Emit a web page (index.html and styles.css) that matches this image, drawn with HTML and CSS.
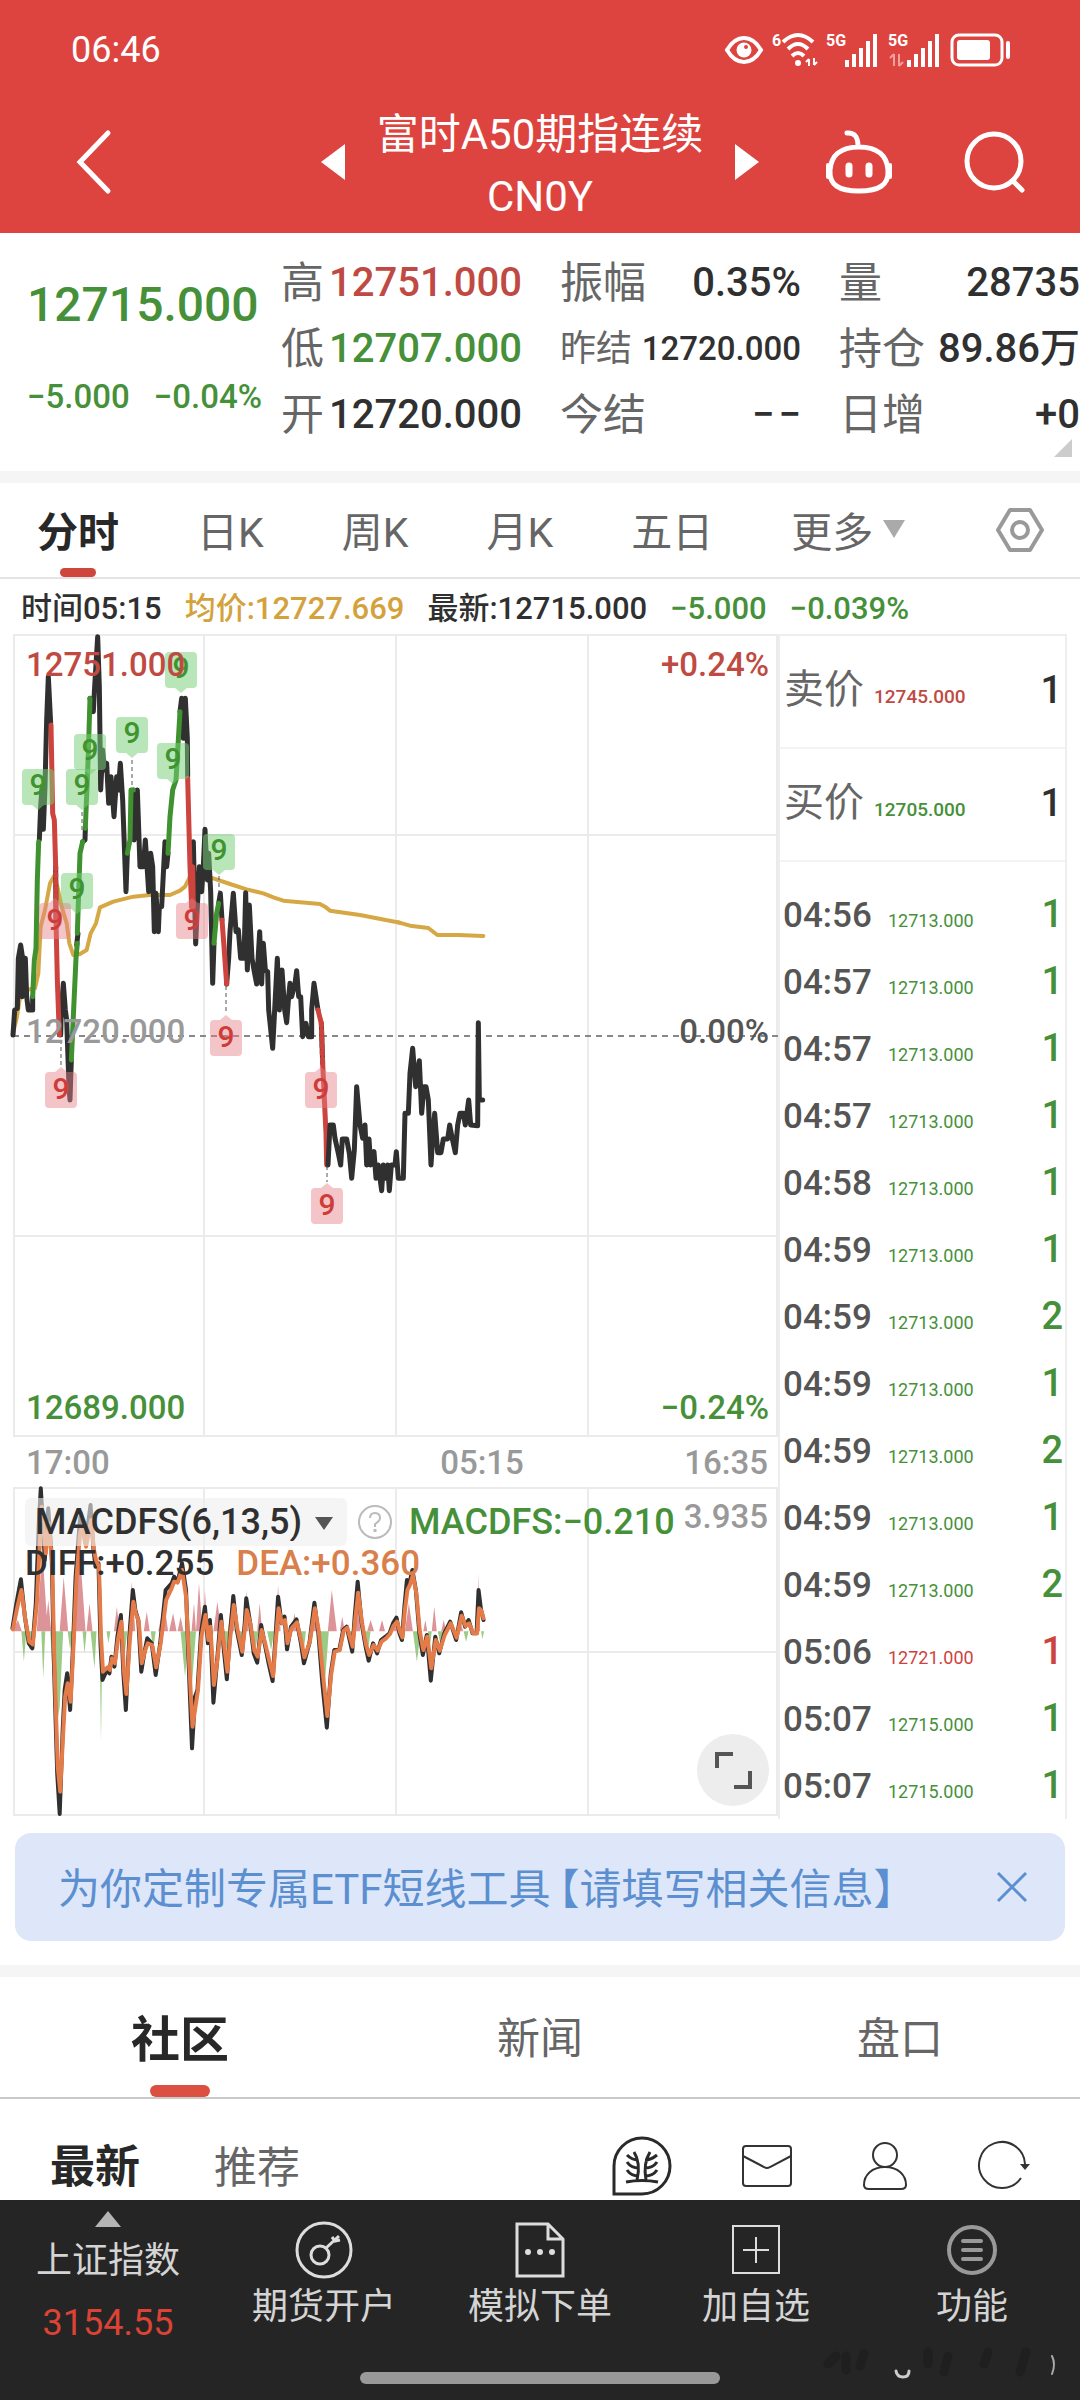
FILE: index.html
```html
<!DOCTYPE html>
<html lang="zh-CN">
<head>
<meta charset="utf-8">
<meta name="viewport" content="width=device-width, initial-scale=1">
<title>富时A50期指连续 CN0Y</title>
<link rel="stylesheet" href="styles.css">
</head>
<body>
<header class="top">
  <div class="status">
    <span>06:46</span>
    <div class="status-icons">
      <svg width="40" height="36" viewBox="0 0 40 36" fill="none" stroke="#fff" stroke-width="4"><path d="M3 18Q10 6 20 6T37 18Q30 30 20 30T3 18Z"/><circle cx="20" cy="18" r="7.500" fill="#fff" stroke="none"/><circle cx="22" cy="15" r="2" fill="#dd4440" stroke="none"/></svg>
      <svg width="46" height="36" viewBox="0 0 46 36" fill="none" stroke="#fff" stroke-width="4"><text x="0" y="14" class="tiny">6</text><path d="M11 10Q26-4 41 10M16 17Q26 7 36 17M20 24Q26 18 32 24"/><circle cx="26" cy="31" r="3" fill="#fff" stroke="none"/><path d="M37 27v7M42 26v7M34 30l3-3M45 30l-3 3" stroke-width="2"/></svg>
      <svg width="54" height="36" viewBox="0 0 54 36" fill="none" stroke="#fff" stroke-width="4"><text x="0" y="14" class="tiny">5G</text><path d="M21 28v7M28 22v13M35 16v19M42 9v26M49 2v33"/></svg>
      <svg width="54" height="36" viewBox="0 0 54 36" fill="none" stroke="#fff" stroke-width="4"><text x="0" y="14" class="tiny">5G</text><path d="M21 28v7M28 22v13M35 16v19M42 9v26M49 2v33"/><path d="M6 22v12M11 22v12M2 26l4-4M15 30l-4 4" stroke-width="2" opacity=".5"/></svg>
      <svg width="62" height="36" viewBox="0 0 62 36" fill="none" stroke="#fff"><rect x="2" y="3" width="50" height="30" rx="7" stroke-width="3"/><rect x="7" y="8" width="33" height="20" rx="3" fill="#fff" stroke="none"/><path d="M58 11v14" stroke-width="4" stroke-linecap="round"/></svg>
    </div>
  </div>
  <nav class="titlebar">
    <button class="ib back" aria-label="返回"><svg width="40" height="68" viewBox="0 0 40 68" fill="none" stroke="#fff" stroke-width="5" stroke-linecap="round"><path d="M34 5L6 34l28 29"/></svg></button>
    <div class="title">
      <button class="ib" aria-label="上一个"><svg width="24" height="36" viewBox="0 0 24 36"><path d="M24 0v36L0 18z" fill="#fff"/></svg></button>
      <h1>富时A50期指连续<br>CN0Y</h1>
      <button class="ib" aria-label="下一个"><svg width="24" height="36" viewBox="0 0 24 36"><path d="M0 0v36l24-18z" fill="#fff"/></svg></button>
    </div>
    <div class="actions">
      <button class="ib" aria-label="助手"><svg width="72" height="68" viewBox="0 0 72 68" fill="none" stroke="#fff" stroke-width="5" stroke-linecap="round"><path d="M24 5Q35 4 35 18M36 19C55 19 64 28 65 42C66 57 56 63 36 63S6 57 7 42C8 28 17 19 36 19Z"/><path d="M5 37v12M67 37v12" stroke-width="4"/><path d="M26 38v8M46 38v8" stroke-width="7"/></svg></button>
      <button class="ib" aria-label="搜索"><svg width="64" height="64" viewBox="0 0 64 64" fill="none" stroke="#fff" stroke-width="5" stroke-linecap="round"><circle cx="31" cy="31" r="27"/><path d="M50 51l9 9"/></svg></button>
    </div>
  </nav>
</header>

<section class="quote">
  <div class="last green"><strong>12715.000</strong><div><span>−5.000</span><span>−0.04%</span></div></div>
  <dl class="stats">
    <div><dt>高</dt><dd class="red">12751.000</dd></div>
    <div><dt>振幅</dt><dd>0.35%</dd></div>
    <div><dt>量</dt><dd>28735</dd></div>
    <div><dt>低</dt><dd class="green">12707.000</dd></div>
    <div class="small"><dt>昨结</dt><dd>12720.000</dd></div>
    <div><dt>持仓</dt><dd>89.86万</dd></div>
    <div><dt>开</dt><dd>12720.000</dd></div>
    <div><dt>今结</dt><dd>−&hairsp;−</dd></div>
    <div><dt>日增</dt><dd>+0</dd></div>
  </dl>
  <i class="corner"></i>
</section>

<nav class="periods">
  <button class="on">分时</button>
  <button>日K</button>
  <button>周K</button>
  <button>月K</button>
  <button>五日</button>
  <button>更多<svg width="22" height="18" viewBox="0 0 22 18"><path d="M0 0h22L11 18z" fill="#aaa"/></svg></button>
  <button class="gear" aria-label="设置"><svg width="50" height="46" viewBox="0 0 50 46" fill="none" stroke="#999" stroke-width="4" stroke-linejoin="round"><path d="M15 3h20L47 23 35 43H15L3 23z"/><circle cx="25" cy="23" r="8"/></svg></button>
</nav>

<p class="info"><span>时间05:15</span><span class="gold">均价:12727.669</span><span>最新:12715.000</span><span class="green">−5.000</span><span class="green">−0.039%</span></p>

<main class="market">
  <div class="charts">
    <figure class="panel">
      <svg class="plot" viewBox="13 634 765 803">
        <defs>
          <g id="up"><path d="M-12 0h24q4 0 4 4v28q0 4-4 4H6l-6 5-6-5h-6q-4 0-4-4V4q0-4 4-4z" fill="#78cf78" fill-opacity=".52"/><text y="26" class="nine" fill="#3f9430">9</text></g>
          <g id="down"><path d="M-12 0h6l6-5 6 5h6q4 0 4 4v28q0 4-4 4h-24q-4 0-4-4V4q0-4 4-4z" fill="#e68088" fill-opacity=".46"/><text y="27" class="nine" fill="#cf3c38">9</text></g>
        </defs>
        <path class="grid" d="M13 635H778M13 835H778M13 1236H778M13 1436H778M14 634V1437M204 634V1437M396 634V1437M588 634V1437M777 634V1437"/>
        <path d="M13 1036H778" stroke="#888" stroke-width="2" stroke-dasharray="6 5"/>
        <svg x="0" y="620" width="400" height="500" viewBox="0 0 1200 1500" class="lines">
          <path class="avg" d="M39 1240L50 1195 62 1120 80 1110 105 1105 115 1060 122 920 135 870 150 790 162 768 172 800 185 860 200 910 208 970 220 1005 240 1002 260 990 272 940 288 910 300 862 340 845 400 830 450 825 510 825 540 812 555 800 570 770 600 760 640 775 690 792 740 808 790 820 820 832 850 842 960 852 975 860 990 872 1080 885 1200 908"/>
          <path class="k" d="M39 1245L44 1170 52 1165 55 1015 62 975 68 1015 66 1130 76 1015 80 1130 85 1170 98 1170 98 1130M118 660L122 560 126 500 130 628 135 500 140 300 145 170 152 310M167 740L168 900M182 1245L184 1170 190 1090 196 1170 200 1200 207 1400 210 1440 214 1320M230 975L234 940M248 665L255 660 256 625M270 235L280 275 284 200 293 50 298 200 302 510 308 390 314 450 320 430 326 550 333 470 342 590 350 470 355 510 361 430 368 540 378 815 382 700M400 510L402 660 412 510 420 740 430 740 436 660 446 815 452 700 458 740 463 935 468 820 475 935 478 860 485 860 495 665 500 740 504 700M540 275L545 235 550 355 556 235 562 355 563 470M575 860L580 665 587 972 592 860 598 740 605 815 610 740 615 628 622 780 626 700 632 815 638 1090 642 970M656 850L661 820 666 900M680 1092L686 1015 690 935 700 820 708 935 715 930 722 1015 732 1015 737 818 742 1050 748 855 756 1015 762 1050 770 1092 779 935 785 1092 790 970 796 1050 803 1055 806 1170 818 1285 824 1170 832 1015 838 1170 846 1050 854 1170 860 1208 866 1130 870 1090 875 1130 885 1090 890 1052 896 1130 902 1130 908 1250 918 1210 925 1250 935 1250 935 1170 942 1090 954 1170M964 1210L968 1330"/>
          <path class="g" d="M98 1130L103 1020 108 985 112 780 116 665M214 1320L228 1015 232 970M232 940L240 700 248 665M256 625L265 400 270 235M382 700L390 660 393 510 400 510M504 700L510 590 518 510 528 480 535 360 540 275M642 970L650 880 656 850"/>
          <path class="r" d="M153 315L158 580 163 600 167 740M168 900L172 1080 178 1245M563 475L570 740 575 860 578 740 580 860M666 900L672 980 680 1092M954 1170L964 1210M968 1330L978 1540 980 1635"/>
          <path class="r" stroke-dasharray="3 4" d="M167 740L168 900M964 1210L968 1330"/>
        </svg>
        <svg x="180" y="820" width="400" height="420" viewBox="0 0 1200 1260" class="lines">
          <path class="avg" d="M655 307L690 317 745 324 772 345 835 345 910 348"/>
          <path class="k" d="M444 1035L450 915 460 915 465 955 475 1000 482 1035 487 957 500 957 508 1000 515 1075 523 990 530 800 540 915 548 955 555 915 560 1035 567 957 572 1035 582 995 588 1075 595 1035 600 1075 605 1112 610 1035 618 1075 623 1035 628 1112 634 1035 645 1035 649 995 655 1075 670 1075 675 880 685 880 690 760 698 685 707 800 718 722 725 880 732 800 738 800 745 840 753 1035 758 955 764 880 773 998 783 998 790 957 803 957 809 915 817 957 826 998 833 915 840 880 850 880 856 915 866 840 872 915 893 917 895 608 898 840 908 840"/>
        </svg>
        <path d="M132 760V788M219 876V892M61 1040V1066M226 986V1014M327 1166V1182M82 812V830" stroke="#555" stroke-width="1" stroke-dasharray="4 3"/>
        <use href="#up" x="181" y="652"/><use href="#up" x="132" y="717"/><use href="#up" x="90" y="734"/><use href="#up" x="173" y="743"/><use href="#up" x="82" y="769"/><use href="#up" x="38" y="769"/><use href="#up" x="77" y="873"/><use href="#up" x="219" y="834"/>
        <use href="#down" x="55" y="903"/><use href="#down" x="61" y="1072"/><use href="#down" x="192" y="903"/><use href="#down" x="226" y="1020"/><use href="#down" x="321" y="1072"/><use href="#down" x="327" y="1188"/>
      </svg>
      <figcaption class="scale">
        <span class="red">12751.000</span><span class="red">+0.24%</span>
        <span class="mid dim">12720.000</span><span class="mid">0.00%</span>
        <span class="green">12689.000</span><span class="green">−0.24%</span>
      </figcaption>
    </figure>
    <div class="times"><time>17:00</time><time>05:15</time><time>16:35</time></div>
    <figure class="panel">
      <svg class="plot" viewBox="13 1487 765 329">
        <path class="grid" d="M13 1488H778M13 1652H778M13 1815H778M14 1487V1816M204 1487V1816M396 1487V1816M588 1487V1816M777 1487V1816"/>
        <svg x="0" y="1390" width="780" height="440" viewBox="0 0 1568 1320" preserveAspectRatio="none" class="lines thin">
          <path fill="#dd9498" d="M25 724L36 690 44 724ZM74 724L85 480 96 724ZM91 724L97 630 103 724ZM120 724L128 560 137 724ZM148 724L160 470 172 724ZM174 724L180 640 186 724ZM229 724L235 650 240 724ZM258 724L265 575 272 724ZM289 724L295 665 301 724ZM318 724L330 640 338 724ZM340 724L348 670 355 724ZM357 724L363 680 369 724ZM385 724L390 640 394 724ZM394 724L400 580 407 724ZM408 724L412 600 417 724ZM429 724L437 635 445 724ZM458 724L465 640 471 724ZM490 724L495 600 500 724ZM517 724L522 640 527 724ZM554 724L559 585 564 724ZM586 724L592 670 598 724ZM624 724L632 640 638 724ZM659 724L667 600 677 724ZM683 724L688 680 693 724ZM714 724L719 580 724 724ZM738 724L745 690 752 724ZM762 724L768 690 774 724ZM791 724L797 680 803 724ZM814 724L822 640 830 724ZM851 724L855 690 859 724ZM868 724L873 650 878 724ZM887 724L892 690 897 724ZM919 724L925 690 931 724ZM960 724L962 550 965 724Z"/>
          <path fill="#9cca87" d="M43 724L48 815 53 724ZM54 724L60 780 66 724ZM83 724L87 865 91 724ZM101 724L108 900 115 1000 120 950 127 724ZM136 724L141 780 146 724ZM166 724L170 790 174 724ZM182 724L190 835 194 724ZM200 724L203 1055 206 724ZM214 724L218 760 222 724ZM244 724L250 800 256 724ZM275 724L280 770 285 724ZM303 724L308 780 313 724ZM363 724L372 860 380 724ZM376 724L385 900 394 724ZM421 724L425 770 429 724ZM450 724L455 780 460 724ZM477 724L482 770 487 724ZM504 724L512 790 520 724ZM537 724L545 780 551 724ZM570 724L575 760 580 724ZM605 724L610 790 615 724ZM643 724L653 880 661 724ZM703 724L708 770 713 724ZM735 724L740 780 745 724ZM806 724L810 760 814 724ZM830 724L838 815 846 724ZM860 724L864 770 868 724ZM880 724L885 760 890 724ZM932 724L937 755 942 724ZM967 724L970 748 973 724Z"/>
          <path class="k" d="M25 715L33 640 42 568 50 680 58 760 65 775 72 640 78 400 82 295 87 420 90 510 97 355 104 500 108 800 115 1150 120 1272 126 1020 130 900 135 850 141 960 147 760 152 560 160 400 163 370 172 460 182 345 188 480 192 530 198 520 202 760 206 870 215 840 220 850 224 800 230 830 236 740 243 675 248 850 253 960 260 740 267 600 272 660 278 690 284 845 290 790 296 745 305 760 313 855 322 760 333 600 345 580 350 560 357 575 366 520 374 600 380 850 386 1075 392 920 397 900 404 730 412 650 418 760 422 690 429 938 436 820 444 675 450 780 456 868 462 740 469 618 476 720 486 795 492 700 495 625 503 700 510 790 517 818 525 705 532 760 540 820 548 873 553 760 559 620 566 700 572 680 577 778 585 710 596 688 605 760 611 820 622 760 632 638 640 730 648 880 657 1013 665 850 672 780 682 780 690 720 697 710 708 785 713 680 719 575 727 700 735 770 741 812 750 760 758 790 766 750 775 740 783 730 790 700 797 683 803 730 808 750 813 650 818 570 823 580 829 540 836 600 843 730 850 795 858 735 866 872 875 740 883 790 893 730 905 695 917 750 927 667 935 710 942 690 950 730 958 730 962 600 967 660 972 690"/>
          <path class="o" d="M26 718L35 650 43 600 51 690 59 755 66 763 74 640 80 460 84 350 88 420 92 490 98 400 105 520 109 800 116 1130 121 1205 127 1030 131 920 136 880 142 935 148 760 154 560 161 430 165 410 173 470 183 390 189 480 193 510 199 530 203 740 207 845 216 832 221 840 225 805 231 820 237 750 244 695 249 840 254 912 261 750 268 635 273 670 279 695 285 820 291 785 297 760 306 765 314 832 323 760 334 630 345 595 350 575 357 578 366 540 374 620 381 840 387 1010 393 950 398 900 405 740 413 675 419 750 423 710 430 885 437 810 445 695 451 770 457 845 463 740 470 645 477 715 487 785 493 705 496 660 504 705 511 780 518 800 526 720 533 760 541 810 549 858 554 760 560 655 567 700 573 690 578 760 586 715 597 697 606 755 612 802 623 755 633 655 641 725 649 850 658 978 666 850 673 785 683 780 691 722 698 713 709 770 714 690 720 608 728 700 736 765 742 795 751 765 759 782 767 755 776 745 784 732 791 708 798 695 804 725 809 742 814 660 819 600 824 585 830 555 837 610 844 725 851 780 859 740 867 835 876 750 884 782 894 735 906 700 918 743 928 677 936 708 943 700 951 730 959 730 963 655 968 662 972 685"/>
        </svg>
      </svg>
      <div class="legend">
        <div class="legend-row">
          <select aria-label="指标"><option>MACDFS(6,13,5)</option></select>
          <button class="ib" aria-label="指标说明"><svg width="36" height="36" viewBox="0 0 36 36" fill="none" stroke="#bbb" stroke-width="2"><circle cx="18" cy="18" r="16"/><path d="M13 14q0-5 5-5t5 5q0 3-5 6v3" stroke-width="2"/><path d="M18 25v3" stroke-width="3"/></svg></button>
          <span class="green">MACDFS:−0.210</span>
        </div>
        <div class="legend-row two"><span>DIFF:+0.255</span><span class="orange">DEA:+0.360</span></div>
      </div>
      <span class="macd-max">3.935</span>
      <button class="expand" aria-label="全屏"><svg width="40" height="40" viewBox="0 0 40 40" fill="none" stroke="#555" stroke-width="4"><path d="M4 18V4h16M37 21v16H21"/></svg></button>
    </figure>
  </div>

  <aside class="ticks">
    <div class="side"><b>卖价</b><span class="red">12745.000</span><em>1</em></div>
    <div class="side"><b>买价</b><span class="green">12705.000</span><em>1</em></div>
    <table>
      <tr><td>04:56</td><td>12713.000</td><td>1</td></tr>
      <tr><td>04:57</td><td>12713.000</td><td>1</td></tr>
      <tr><td>04:57</td><td>12713.000</td><td>1</td></tr>
      <tr><td>04:57</td><td>12713.000</td><td>1</td></tr>
      <tr><td>04:58</td><td>12713.000</td><td>1</td></tr>
      <tr><td>04:59</td><td>12713.000</td><td>1</td></tr>
      <tr><td>04:59</td><td>12713.000</td><td>2</td></tr>
      <tr><td>04:59</td><td>12713.000</td><td>1</td></tr>
      <tr><td>04:59</td><td>12713.000</td><td>2</td></tr>
      <tr><td>04:59</td><td>12713.000</td><td>1</td></tr>
      <tr><td>04:59</td><td>12713.000</td><td>2</td></tr>
      <tr class="up"><td>05:06</td><td>12721.000</td><td>1</td></tr>
      <tr><td>05:07</td><td>12715.000</td><td>1</td></tr>
      <tr><td>05:07</td><td>12715.000</td><td>1</td></tr>
    </table>
  </aside>
</main>

<div class="banner"><a href="#etf">为你定制专属ETF短线工具<span class="bracket">【</span>请填写相关信息】</a><button class="ib" aria-label="关闭"><svg width="36" height="36" viewBox="0 0 36 36" fill="none" stroke="#5b8fd0" stroke-width="3"><path d="M4 4l28 28M32 4L4 32"/></svg></button></div>

<nav class="sections">
  <button class="on">社区</button><button>新闻</button><button>盘口</button>
</nav>

<div class="feed">
  <button class="on">最新</button><button>推荐</button>
  <div class="feed-icons">
    <button class="ib" aria-label="发帖"><svg width="60" height="60" viewBox="0 0 60 60" fill="none" stroke="#2a2a2a" stroke-width="3"><path d="M2 58V30A28 28 0 1 1 30 58Z"/><path d="M25 44Q29 27 22 16M34 44Q31 27 38 16M26 24q-6 0-11-5M27 32q-8 0-12-6M27 40q-8 0-12-6M33 24q6 0 12-5M33 32q8 0 12-6M33 40q8 0 12-6M14 46q16-3 32 0"/></svg></button>
    <button class="ib" aria-label="消息"><svg width="54" height="44" viewBox="0 0 54 44" fill="none" stroke="#333" stroke-width="2"><rect x="3" y="2" width="48" height="40" rx="3"/><path d="M3 12l21 11q3 2 6 0l21-11"/></svg></button>
    <button class="ib" aria-label="我的"><svg width="46" height="52" viewBox="0 0 46 52" fill="none" stroke="#333" stroke-width="2"><circle cx="23" cy="15" r="12"/><path d="M23 27C10 27 2 35 2 45q0 4 5 4h32q5 0 5-4C44 35 36 27 23 27Z"/></svg></button>
    <button class="ib" aria-label="刷新"><svg width="54" height="52" viewBox="0 0 54 52" fill="none" stroke="#333" stroke-width="2"><path d="M45 38A23 23 0 1 1 49 24"/><path d="M44 24h10l-5 6z" fill="#333" stroke="none"/></svg></button>
  </div>
</div>

<footer class="dock">
  <div class="dock-row">
    <a href="#index" class="index"><svg width="26" height="16" viewBox="0 0 26 16"><path d="M0 16h26L13 0z" fill="#b5b5b5"/></svg><span>上证指数</span><b>3154.55</b></a>
    <a href="#open"><svg width="60" height="60" viewBox="0 0 60 60" fill="none" stroke="#ddd" stroke-width="3"><circle cx="30" cy="30" r="27"/><circle cx="26" cy="35" r="9"/><path d="M32 28L45 16M38 17l3 4 5-1"/></svg><span>期货开户</span></a>
    <a href="#demo"><svg width="60" height="60" viewBox="0 0 60 60" fill="none" stroke="#ddd" stroke-width="3"><path d="M7 4h31l15 15v37H7zM38 4v15h15"/><path d="M18 32h0M30 32h0M42 32h0" stroke-width="6" stroke-linecap="round"/></svg><span>模拟下单</span></a>
    <a href="#add"><svg width="60" height="60" viewBox="0 0 60 60" fill="none" stroke="#ddd" stroke-width="2"><path d="M7 6h46v47H7zM30 17v26M17 30h26"/></svg><span>加自选</span></a>
    <a href="#more"><svg width="60" height="60" viewBox="0 0 60 60" fill="none" stroke="#999" stroke-width="4" stroke-linecap="round"><circle cx="30" cy="30" r="23"/><path d="M21 21h18M21 30h18M21 39h18"/></svg><span>功能</span></a>
  </div>
  <i class="home"></i>
  <svg class="mark" width="240" height="44" viewBox="0 0 240 44" fill="none" stroke-linecap="round"><path d="M8 20l8-8M26 12v14M44 10l-4 12M108 8v12M128 12l-4 16M168 8l-4 12M206 8l-6 20" stroke="#1f1f1f" stroke-width="9"/><path d="M76 27q1 6 7 6t6-6" stroke="#ccc" stroke-width="3"/><path d="M232 12q4 8 0 18" stroke="#aaa" stroke-width="2"/></svg>
</footer>
</body>
</html>
```
FILE: styles.css
```css
* { box-sizing: border-box; margin: 0; padding: 0; }
body {
  background: #fff;
  color: #303030;
  font-family: Roboto, "Noto Sans CJK SC", sans-serif;
  font-weight: 500;
}
button, select { font: inherit; color: inherit; background: none; border: 0; }
svg { display: block; flex: none; overflow: visible; }
a { color: inherit; text-decoration: none; }
.ib { display: flex; align-items: center; justify-content: center; }
.red { color: #bf4a43; }
.green { color: #46903a; }
.gold { color: #d4a23c; }
.orange { color: #d97f4c; }

/* header */
.top { background: #dd4440; color: #fff; height: 233px; }
.status { display: flex; justify-content: space-between; align-items: center; height: 100px; padding: 0 68px 0 71px; font-size: 36px; font-weight: 400; }
.status-icons { display: flex; gap: 8px; }
.tiny { font-size: 16px; font-weight: 700; fill: #fff; stroke: none; }
.titlebar { display: grid; grid-template-columns: 1fr auto 1fr; align-items: center; height: 124px; padding: 0 53px; }
.back { justify-self: start; margin-left: 21px; }
.title { display: flex; align-items: center; gap: 32px; }
.title h1 { margin: 4px 0 -4px; font-size: 42px; line-height: 62px; font-weight: 400; text-align: center; }
.actions { display: flex; justify-content: flex-end; align-items: center; gap: 68px; }

/* quote */
.quote { position: relative; display: grid; grid-template-columns: 281px 1fr; height: 250px; padding-top: 17px; border-bottom: 12px solid #f5f5f5; }
.last { padding: 19px 0 0 27px; }
.last strong { display: block; font-size: 48px; line-height: 72px; font-weight: 500; }
.last div { display: flex; gap: 24px; margin-top: 36px; font-size: 33px; line-height: 40px; }
.stats { display: grid; grid-template-columns: repeat(3, 1fr); column-gap: 38px; grid-auto-rows: 66px; }
.stats div { display: flex; justify-content: space-between; align-items: center; font-size: 40px; line-height: 66px; white-space: nowrap; }
.stats dt { font-size: 43px; font-weight: 400; color: #666; }
.stats .small { font-size: 33px; }
.stats .small dt { font-size: 36px; }
.corner { position: absolute; right: 8px; bottom: 14px; width: 18px; height: 18px; background: #ccc; clip-path: polygon(100% 0, 100% 100%, 0 100%); }

/* period tabs */
.periods { display: flex; gap: 78px; height: 96px; padding: 0 35px 0 37px; border-bottom: 2px solid #e4e4e4; font-size: 41px; font-weight: 400; color: #666; white-space: nowrap; }
.periods button { display: flex; align-items: center; gap: 10px; position: relative; padding-bottom: 2px; }
.periods .gear { margin-left: auto; padding: 0; }
.periods .on, .sections .on, .feed .on { color: #282828; font-weight: 700; }
.periods .on::after, .sections .on::after { content: ""; position: absolute; left: 50%; bottom: 0; width: 36px; height: 9px; border-radius: 5px; background: #cf463c; transform: translateX(-50%); }
.info { display: flex; gap: 23px; height: 55px; padding: 4px 0 0 21px; font-size: 31px; line-height: 52px; white-space: nowrap; }

/* charts */
.market { display: grid; grid-template-columns: 765fr 289fr; padding: 0 13px; }
.panel { position: relative; }
.plot { width: 100%; height: auto; }
.grid { fill: none; stroke: #ebebeb; stroke-width: 2; }
.lines { stroke-linejoin: round; stroke-linecap: round; }
.lines .avg, .lines .k, .lines .g, .lines .r, .lines .o { fill: none; vector-effect: non-scaling-stroke; stroke-width: 5px; }
.lines .avg { stroke: #d6a845; stroke-width: 4px; }
.lines .k { stroke: #303030; }
.lines .g { stroke: #40912f; }
.lines .r { stroke: #cd433d; }
.thin .k { stroke-width: 4px; }
.thin .o { stroke: #e47b48; stroke-width: 4px; }
.nine { font-size: 30px; text-anchor: middle; }
.scale { position: absolute; inset: 10px 9px 8px 13px; display: grid; grid-template-columns: auto auto; align-content: space-between; justify-content: space-between; font-size: 33px; line-height: 42px; }
.scale span:nth-child(even) { text-align: right; }
.scale .mid { padding-bottom: 10px; color: #555; }
.scale .dim { color: #999; }
.times { display: grid; grid-template-columns: 1fr 1fr 1fr; height: 50px; padding: 0 10px 0 13px; font-size: 33px; line-height: 52px; color: #999; }
.times time:nth-child(2) { padding-left: 170px; }
.times time:last-child { text-align: right; }
.legend { position: absolute; top: 11px; left: 12px; font-size: 36px; line-height: 38px; white-space: nowrap; }
.legend-row { display: flex; align-items: center; gap: 10px; }
.legend-row > span { padding-left: 6px; }
.legend .two { gap: 16px; font-size: 35px; line-height: 36px; }
.two > span:first-child { padding-left: 0; }
.legend select { appearance: none; width: 322px; height: 48px; padding-left: 10px; border-radius: 6px; background: rgba(238, 238, 238, .6); }
.legend-row:first-child { position: relative; }
.legend-row:first-child::after { content: ""; position: absolute; left: 290px; top: 19px; border: 9px solid transparent; border-top: 13px solid #555; border-bottom: 0; pointer-events: none; }
.macd-max { position: absolute; right: 10px; top: 10px; font-size: 33px; line-height: 40px; color: #999; }
.expand { position: absolute; right: 9px; bottom: 10px; width: 72px; height: 72px; border-radius: 50%; background: #ededed; display: flex; align-items: center; justify-content: center; }

/* tick list */
.ticks { border: 2px solid #eee; border-width: 2px 2px 0 2px; }
.side { display: flex; align-items: baseline; height: 113px; padding: 26px 3px 0 4px; border-bottom: 2px solid #f3f3f3; line-height: 56px; }
.side b { font-size: 40px; font-weight: 400; color: #666; }
.side span { margin-left: 10px; font-size: 19px; }
.side em { margin-left: auto; font-size: 38px; font-style: normal; }
.ticks table { width: 100%; margin-top: 19px; border-collapse: collapse; color: #46903a; }
.ticks tr { display: flex; align-items: baseline; height: 67px; padding: 0 2px 0 3px; line-height: 67px; }
.ticks td:nth-child(1) { width: 105px; font-size: 35px; color: #555; }
.ticks td:nth-child(2) { font-size: 18px; font-weight: 400; }
.ticks td:nth-child(3) { margin-left: auto; font-size: 38px; }
.ticks .up { color: #cd433d; }

/* banner */
.banner { display: flex; align-items: center; justify-content: space-between; height: 108px; margin: 14px 15px 24px; padding: 0 35px 0 43px; border-radius: 16px; background: #dde7f9; color: #5b8fd0; font-size: 42px; font-weight: 400; white-space: nowrap; }
.banner a { padding-bottom: 4px; }
.bracket { padding-left: 8px; font-feature-settings: "halt"; }

/* community */
.sections { display: grid; grid-template-columns: repeat(3, 1fr); height: 134px; border-top: 12px solid #f5f5f5; border-bottom: 2px solid #c9c9c9; font-size: 43px; font-weight: 400; color: #666; }
.sections button { position: relative; padding-bottom: 4px; }
.sections .on { font-size: 49px; }
.sections .on::after { width: 60px; height: 12px; border-radius: 6px; background: #dc5042; }
.feed { display: flex; align-items: center; height: 101px; padding: 32px 50px 0 50px; gap: 74px; font-size: 43px; font-weight: 400; color: #666; }
.feed > button { padding-bottom: 4px; }
.feed .on { font-size: 45px; }
.feed-icons { display: flex; align-items: center; gap: 68px; margin-left: auto; }

/* bottom bar */
.dock { position: relative; height: 202px; background: #252525; color: #d4d4d4; }
.dock-row { display: grid; grid-template-columns: repeat(5, 1fr); font-size: 36px; font-weight: 400; line-height: 54px; text-align: center; }
.dock-row a { display: flex; flex-direction: column; align-items: center; padding-top: 20px; }
.dock-row .index { padding-top: 11px; }
.index span { margin-top: 7px; }
.index b { margin-top: 8px; font-weight: 400; color: #dc4335; }
.home { position: absolute; left: 50%; bottom: 18px; width: 360px; height: 12px; border-radius: 6px; background: #999; transform: translateX(-50%); }
.mark { position: absolute; right: 20px; bottom: 14px; }
```
